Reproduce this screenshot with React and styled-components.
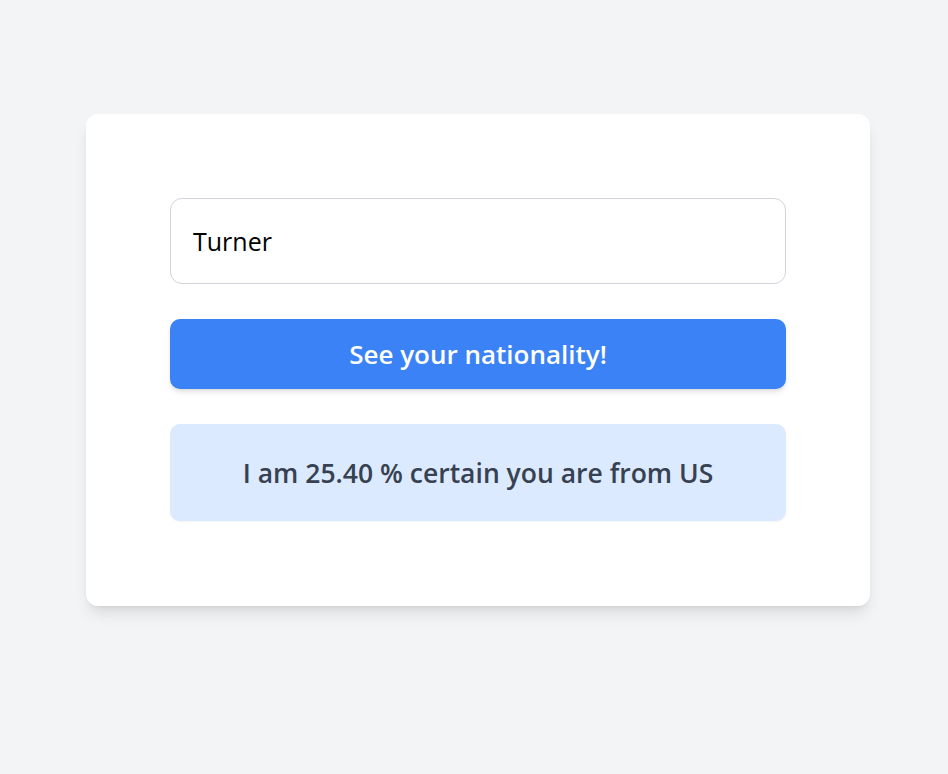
import React from "react";
import styled, { createGlobalStyle } from "styled-components";

const Global = createGlobalStyle`
  html, body { margin: 0; padding: 0; background: #f3f4f6; }
  body { font-family: "Open Sans", "Noto Sans", sans-serif; }
  * { box-sizing: border-box; }
`;

const Page = styled.div`
  min-height: 774px;
  padding: 114px 0 0 86px;
`;

const Card = styled.div`
  width: 784px;
  background: #ffffff;
  border-radius: 12px;
  box-shadow: 0 10px 15px -3px rgba(0,0,0,0.1), 0 4px 6px -4px rgba(0,0,0,0.1);
  padding: 84px 84px 85px;
  display: flex;
  flex-direction: column;
  gap: 35px;
`;

const Input = styled.input`
  height: 86px;
  width: 100%;
  border: 1px solid #d1d5db;
  border-radius: 12px;
  padding: 0 22px;
  font-family: "Open Sans", sans-serif;
  font-size: 25px;
  color: #000;
  outline: none;
`;

const Button = styled.button`
  height: 70px;
  width: 100%;
  border: none;
  border-radius: 10px;
  background: #3b82f6;
  color: #fff;
  font-family: "Open Sans", sans-serif;
  font-size: 26px;
  font-weight: 600;
  box-shadow: 0 4px 6px -1px rgba(0,0,0,0.1), 0 2px 4px -2px rgba(0,0,0,0.1);
  cursor: pointer;
`;

const Result = styled.div`
  height: 97px;
  border-radius: 10px;
  background: #dbeafe;
  color: #374151;
  font-size: 26.5px;
  font-weight: 600;
  display: flex;
  align-items: center;
  justify-content: center;
  box-shadow: 0 1px 2px 0 rgba(0,0,0,0.05);
`;

export default function App() {
  return (
    <>
      <Global />
      <Page>
        <Card>
          <Input defaultValue="Turner" />
          <Button>See your nationality!</Button>
          <Result>I am 25.40 % certain you are from US</Result>
        </Card>
      </Page>
    </>
  );
}
